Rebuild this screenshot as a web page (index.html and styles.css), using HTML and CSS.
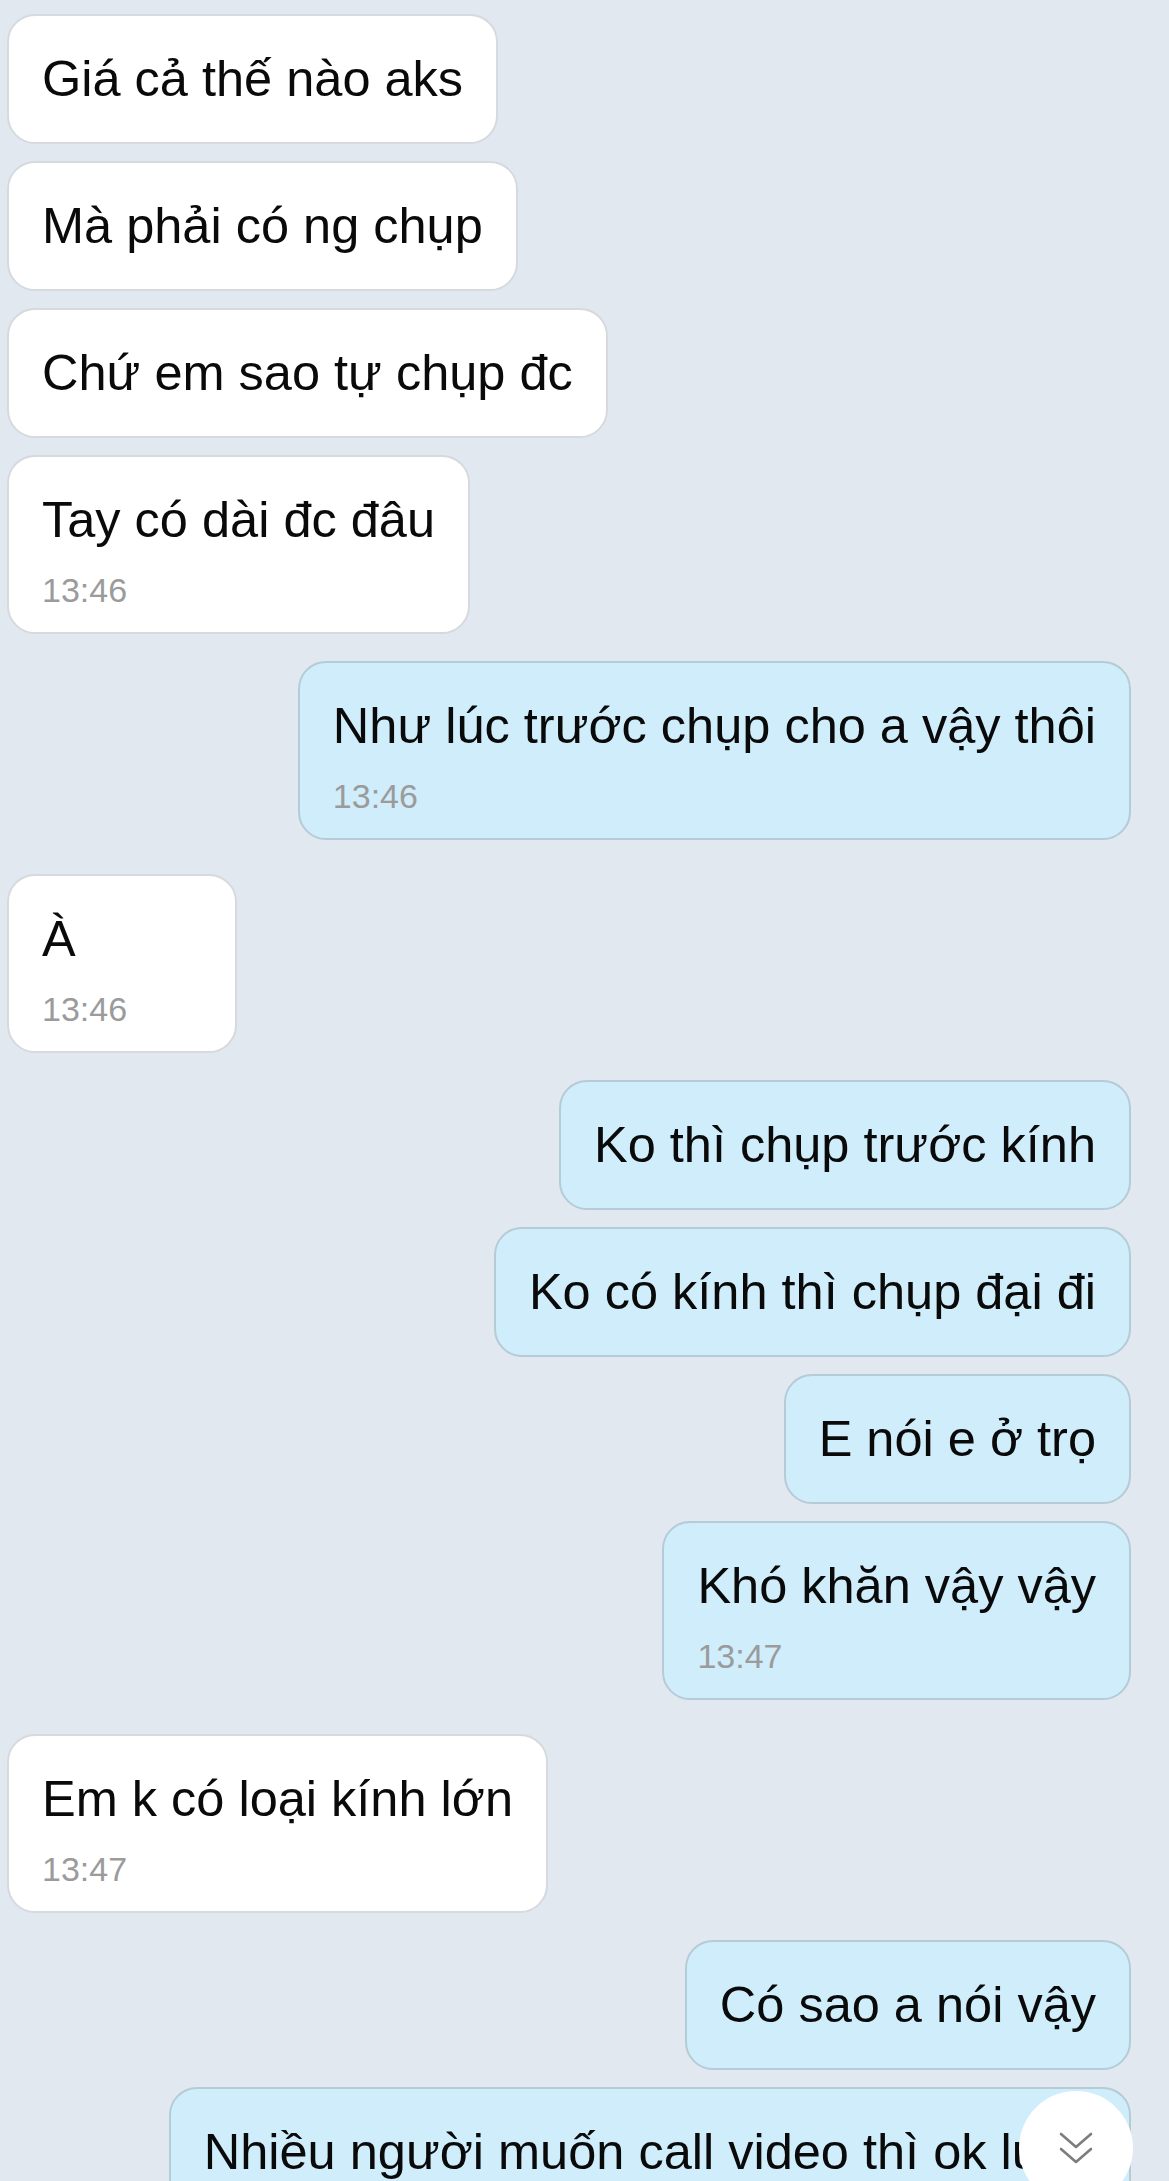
FILE: index.html
```html
<!DOCTYPE html>
<html lang="vi">
<head>
<meta charset="utf-8">
<title>Chat</title>
<link rel="stylesheet" href="styles.css">
</head>
<body>
<main class="chat">
  <section class="group in">
    <div class="bubble">Giá cả thế nào aks</div>
    <div class="bubble">Mà phải có ng chụp</div>
    <div class="bubble">Chứ em sao tự chụp đc</div>
    <div class="bubble timed">Tay có dài đc đâu<span class="time">13:46</span></div>
  </section>
  <section class="group out">
    <div class="bubble timed">Như lúc trước chụp cho a vậy thôi<span class="time">13:46</span></div>
  </section>
  <section class="group in">
    <div class="bubble timed">À<span class="time">13:46</span></div>
  </section>
  <section class="group out">
    <div class="bubble">Ko thì chụp trước kính</div>
    <div class="bubble">Ko có kính thì chụp đại đi</div>
    <div class="bubble">E nói e ở trọ</div>
    <div class="bubble timed">Khó khăn vậy vậy<span class="time">13:47</span></div>
  </section>
  <section class="group in">
    <div class="bubble timed">Em k có loại kính lớn<span class="time">13:47</span></div>
  </section>
  <section class="group out">
    <div class="bubble">Có sao a nói vậy</div>
    <div class="bubble">Nhiều người muốn call video thì ok luôn</div>
  </section>
</main>
<button class="scroll-down" aria-label="Cuộn xuống">
  <svg viewBox="0 0 34 34" width="34" height="34" aria-hidden="true">
    <path d="M2 3 L17 16 L32 3 M2 18 L17 31 L32 18" fill="none" stroke="#7d7d7d" stroke-width="2.6" stroke-linecap="round" stroke-linejoin="round"/>
  </svg>
</button>
</body>
</html>
```
FILE: styles.css
```css
html, body {
  margin: 0;
  padding: 0;
}
body {
  background: #e2e8f0;
  width: 1169px;
  height: 2181px;
  overflow: hidden;
  position: relative;
  font-family: "Liberation Sans", Arial, sans-serif;
  color: #0a0a0a;
}
.chat {
  display: flex;
  flex-direction: column;
  padding: 14px 38px 0 7px;
}
.group {
  display: flex;
  flex-direction: column;
  gap: 17px;
}
.group.in {
  align-items: flex-start;
}
.group.out {
  align-items: flex-end;
}
.group.in + .group.out {
  margin-top: 27px;
}
.group.out + .group.in {
  margin-top: 34px;
}
.bubble {
  box-sizing: border-box;
  min-width: 230px;
  padding: 33px 33px;
  font-size: 50.5px;
  line-height: 60px;
  white-space: nowrap;
  border-radius: 28px;
  display: flex;
  flex-direction: column;
}
.group.in .bubble {
  background: #ffffff;
  border: 2px solid #d6dade;
}
.group.out .bubble {
  background: #cfedfb;
  border: 2px solid #b5cbd6;
}
.bubble.timed {
  padding-bottom: 22px;
}
.time {
  margin-top: 20px;
  font-size: 34px;
  line-height: 40px;
  color: #9b9b9b;
}
.scroll-down {
  position: absolute;
  right: 36px;
  bottom: -24px;
  width: 114px;
  height: 114px;
  border-radius: 50%;
  border: none;
  padding: 0;
  background: #ffffff;
  display: flex;
  align-items: center;
  justify-content: center;
}
.scroll-down svg {
  display: block;
}
```
